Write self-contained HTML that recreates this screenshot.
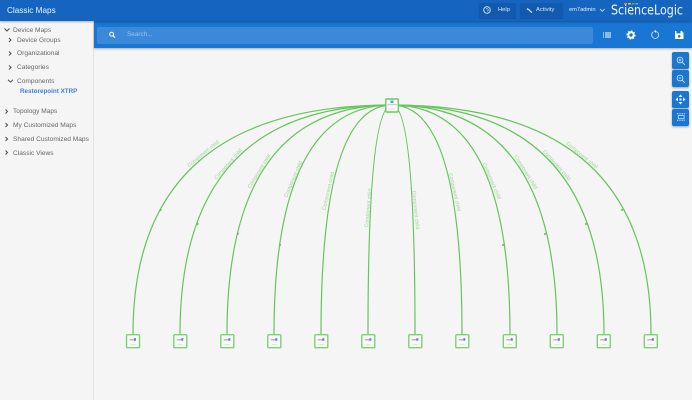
<!DOCTYPE html>
<html><head><meta charset="utf-8">
<style>
html,body{margin:0;padding:0;background:#f5f5f5}
#p{position:relative;width:692px;height:400px;overflow:hidden;background:#f5f5f5;font-family:"Liberation Sans",sans-serif}
.a{position:absolute}
.t{position:absolute;white-space:nowrap;font-size:6.6px;line-height:10px;color:#666}
.b{position:absolute;left:672px;width:17px;background:#1976d2;border-radius:2px;box-shadow:0 1px 2px rgba(0,0,0,.35)}
.h{position:absolute;top:3px;height:15px;background:#125aad;border-radius:2px;box-shadow:0 1px 1px rgba(0,0,0,.2)}
svg{position:absolute;overflow:visible}
</style></head><body><div id="p">

<div class="a" style="left:93px;top:21px;width:1px;height:379px;background:#e2e2e2"></div>

<div class="a" style="left:94px;top:21px;width:598px;height:27px;background:#1976d2;box-shadow:0 1px 2px rgba(0,0,0,.3)"></div>
<div class="a" style="left:97px;top:27px;width:496px;height:17px;background:#3a8ad9;border-radius:2px"></div>
<div class="t" style="left:127px;top:30px;color:#9cc6ef;font-size:6.4px">Search...</div>
<svg style="left:0;top:0" width="692" height="60"><circle cx="111.6" cy="34.2" r="1.9" fill="none" stroke="#fff" stroke-width="1"/><path d="M113 35.7L115 37.6" stroke="#fff" stroke-width="1.2"/></svg>

<div class="a" style="left:0;top:0;width:692px;height:21px;background:#1565c0;box-shadow:0 1px 2px rgba(0,0,0,.3)"></div>
<div class="t" style="left:7px;top:5px;color:#e8f1fb;font-size:8.2px;line-height:11px">Classic Maps</div>
<div class="h" style="left:479px;width:37px"></div>
<div class="h" style="left:520px;width:43px"></div>
<div class="t" style="left:498px;top:5px;color:#dfeafa;font-size:5.8px">Help</div>
<div class="t" style="left:536px;top:5px;color:#dfeafa;font-size:5.8px">Activity</div>
<div class="t" style="left:569px;top:5px;color:#e8f1fb;font-size:5.7px">em7admin</div>
<svg style="left:0;top:0" width="692" height="22">
<text x="611" y="14.500" font-family="'DejaVu Sans',sans-serif" font-size="13" fill="#eef5fc" textLength="72" lengthAdjust="spacingAndGlyphs">ScienceLogic</text>
<circle cx="487" cy="10" r="3.300" fill="none" stroke="#dfeafa" stroke-width=".9"/><path d="M486 9.200q1-1.300 2 0t-1 2" fill="none" stroke="#dfeafa" stroke-width=".6"/>
<path d="M527.500 8l1.800 1.400 3 2.800-1 .8-3-3-1.700-.6z" fill="#dfeafa"/>
<path d="M600 9l2.300 2.300 2.300-2.300" fill="none" stroke="#dfeafa" stroke-width=".8"/>
<rect x="624" y="3" width="3" height="1.500" fill="#d98b3a"/><rect x="628" y="3" width="3" height="1.500" fill="#d6c23f"/><rect x="632" y="3" width="2.500" height="1.500" fill="#5fb04e"/><rect x="635.500" y="3" width="2.500" height="1.500" fill="#58b8a0"/>
</svg>

<svg style="left:0;top:0" width="94" height="170" fill="none" stroke="#4a4a4a" stroke-width="1">
<path d="M4.500 28.500l2.500 2.500 2.500-2.500"/>
<path d="M9 38l2 2-2 2M9 51.500l2 2-2 2M9 65.500l2 2-2 2"/>
<path d="M8 79.800l2.500 2.300 2.500-2.300"/>
<path d="M5.500 109.500l2 2-2 2M5.500 123l2 2-2 2M5.500 137l2 2-2 2M5.500 150.500l2 2-2 2"/>
</svg>
<div class="t" style="left:13px;top:25.500px">Device Maps</div>
<div class="t" style="left:17px;top:35.500px">Device Groups</div>
<div class="t" style="left:17px;top:49px">Organizational</div>
<div class="t" style="left:17px;top:62.500px">Categories</div>
<div class="t" style="left:17px;top:76.500px">Components</div>
<div class="t" style="left:20px;top:86.500px;color:#3f83da;font-weight:bold;font-size:6.300px">Restorepoint XTRP</div>
<div class="t" style="left:13px;top:107px">Topology Maps</div>
<div class="t" style="left:13px;top:120.500px">My Customized Maps</div>
<div class="t" style="left:13px;top:134.500px">Shared Customized Maps</div>
<div class="t" style="left:13px;top:148.500px">Classic Views</div>

<svg style="left:0;top:0" width="692" height="60">
<path d="M605 33h6M605 35h6M605 37h6" stroke="#fff" stroke-width="1"/><path d="M603 33h1M603 35h1M603 37h1" stroke="#fff" stroke-width="1"/>
<circle cx="631" cy="35" r="2.700" fill="none" stroke="#fff" stroke-width="2"/><circle cx="631" cy="35" r="4" fill="none" stroke="#fff" stroke-width="1.100" stroke-dasharray="1.600 1.500"/>
<path d="M653.200 32a3.500 3.500 0 1 0 2.800-.5" fill="none" stroke="#dbe9f9" stroke-width=".8"/><path d="M656 30v2.800l-2.200-1.400z" fill="#fff"/>
<path d="M675 31h6.800l1.700 1.700V39h-8.500z" fill="#fff"/><rect x="676.500" y="31" width="4" height="2.400" fill="#1976d2"/><circle cx="679.200" cy="36.300" r="1.300" fill="#1976d2"/>
</svg>

<div class="b" style="top:52px;height:17px"></div>
<div class="b" style="top:70px;height:17px"></div>
<div class="b" style="top:91px;height:17px"></div>
<div class="b" style="top:109px;height:17px"></div>
<svg style="left:0;top:0" width="692" height="130" fill="none" stroke="#d6e6f8" stroke-width=".8">
<circle cx="680" cy="60" r="2.900"/><path d="M682.200 62.200l2.600 2.600M678.600 60h2.800M680 58.600v2.800"/>
<circle cx="680" cy="78" r="2.900"/><path d="M682.200 80.200l2.600 2.600M678.600 78h2.800"/>
<path d="M680.500 94.500l2 2.400h-4zM680.500 104.500l-2-2.400h4zM675.500 99.500l2.400-2v4zM685.500 99.500l-2.400-2v4z" fill="#fff" stroke="none"/><rect x="679.500" y="98.500" width="2" height="2" fill="#fff" stroke="none"/>
<path d="M677 113.800h8.500M677 120.200h8.500" stroke-dasharray="1 .7" stroke-width="1"/><rect x="678.300" y="115.500" width="5.800" height="3.200" stroke="#c8ddf6"/>
</svg>

<svg id="g" style="left:0;top:0" width="692" height="400">
<g fill="none" stroke="#66c45c" stroke-width="1.200">
<path d="M392 105Q133 105 133 334"/>
<path d="M392 105Q180 105 180 334"/>
<path d="M392 105Q227 105 227 334"/>
<path d="M392 105Q274 105 274 334"/>
<path d="M392 105Q321 105 321 334"/>
<path d="M392 105Q368 105 368 334"/>
<path d="M392 105Q415 105 415 334"/>
<path d="M392 105Q462 105 462 334"/>
<path d="M392 105Q510 105 510 334"/>
<path d="M392 105Q557 105 557 334"/>
<path d="M392 105Q604 105 604 334"/>
<path d="M392 105Q651 105 651 334"/>
</g>
<g fill="#5fbc55">
<circle cx="160.500" cy="210" r="1"/><circle cx="197.700" cy="224" r="1"/><circle cx="238" cy="233.700" r="1"/><circle cx="280" cy="245" r="1"/>
<circle cx="622" cy="210" r="1"/><circle cx="586" cy="224" r="1"/><circle cx="545" cy="234" r="1"/><circle cx="503" cy="245" r="1"/>
</g>
<g font-family="'Liberation Sans',sans-serif" font-size="5.200" fill="#98d690" text-anchor="middle">
<text transform="translate(203,153.500) rotate(-39.500)" y="1.800">Component child</text>
<text transform="translate(228,164) rotate(-48.700)" y="1.800">Component child</text>
<text transform="translate(259,171) rotate(-58)" y="1.800">Component child</text>
<text transform="translate(293,179) rotate(-66.700)" y="1.800">Component child</text>
<text transform="translate(328,191) rotate(-76.900)" y="1.800">Component child</text>
<text transform="translate(368,208) rotate(-84.600)" y="1.800">Component child</text>
<text transform="translate(416,210) rotate(84.500)" y="1.800">Component child</text>
<text transform="translate(455,192) rotate(77)" y="1.800">Component child</text>
<text transform="translate(492,181) rotate(66.800)" y="1.800">Component child</text>
<text transform="translate(526,172) rotate(58)" y="1.800">Component child</text>
<text transform="translate(557,165) rotate(48.700)" y="1.800">Component child</text>
<text transform="translate(582,155) rotate(39.500)" y="1.800">Component child</text>
</g>

<g>
<rect x="385.800" y="99" width="12.500" height="13" rx="1" fill="#fafafa" stroke="#6cc763" stroke-width="1.400"/>
<rect x="390.500" y="100.500" width="3" height="2.500" fill="#4aa8e0"/>
<rect x="387.500" y="104.300" width="9.500" height=".8" fill="#b4b9be"/>
<rect x="389" y="108.800" width="6" height=".6" fill="#d4d4d4"/>
</g>
<defs><g id="n">
<rect x="-6.500" y="0" width="13" height="13" rx="1" fill="#f8f8f8" stroke="#80cf78" stroke-width="1.400"/>
<rect x="-3.500" y="4.300" width="5" height="1.500" fill="#b8bcc2"/>
<rect x="1" y="3.500" width="2" height="2.500" fill="#6a80c0"/>
<rect x="-2.500" y="9.500" width="5" height=".7" fill="#dcdcdc"/>
</g></defs>
<use href="#n" x="133" y="334.700"/><use href="#n" x="180.300" y="334.700"/><use href="#n" x="227.300" y="334.700"/><use href="#n" x="274.300" y="334.700"/><use href="#n" x="321.300" y="334.700"/><use href="#n" x="368.300" y="334.700"/><use href="#n" x="415.300" y="334.700"/><use href="#n" x="462.300" y="334.700"/><use href="#n" x="509.800" y="334.700"/><use href="#n" x="556.800" y="334.700"/><use href="#n" x="603.800" y="334.700"/><use href="#n" x="650.800" y="334.700"/>
</svg>

</div></body></html>
